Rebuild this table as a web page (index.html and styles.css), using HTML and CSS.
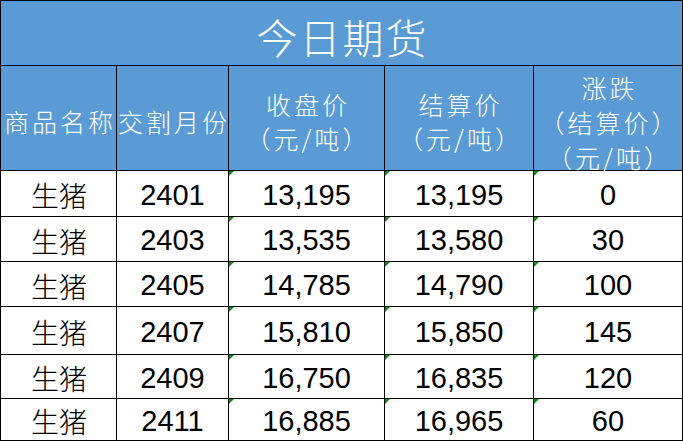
FILE: index.html
```html
<!DOCTYPE html>
<html lang="zh">
<head>
<meta charset="utf-8">
<title>今日期货</title>
<link rel="stylesheet" href="styles.css">
</head>
<body>
<div class="sheet">
  <div class="cell title"><span class="tt">今日期货</span></div>

  <div class="cell head"><span class="ln">商品名称</span></div>
  <div class="cell head"><span class="ln">交割月份</span></div>
  <div class="cell head"><span class="ln">收盘价</span><span class="ln">（元/吨）</span></div>
  <div class="cell head"><span class="ln">结算价</span><span class="ln">（元/吨）</span></div>
  <div class="cell head three"><span class="ln">涨跌</span><span class="ln">（结算价）</span><span class="ln">（元/吨）</span></div>

  <div class="cell name">生猪</div><div class="cell num">2401</div><div class="cell num flag">13,195</div><div class="cell num flag">13,195</div><div class="cell num flag">0</div>
  <div class="cell name">生猪</div><div class="cell num">2403</div><div class="cell num flag">13,535</div><div class="cell num flag">13,580</div><div class="cell num flag">30</div>
  <div class="cell name">生猪</div><div class="cell num">2405</div><div class="cell num flag">14,785</div><div class="cell num flag">14,790</div><div class="cell num flag">100</div>
  <div class="cell name">生猪</div><div class="cell num">2407</div><div class="cell num flag">15,810</div><div class="cell num flag">15,850</div><div class="cell num flag">145</div>
  <div class="cell name">生猪</div><div class="cell num">2409</div><div class="cell num flag">16,750</div><div class="cell num flag">16,835</div><div class="cell num flag">120</div>
  <div class="cell name">生猪</div><div class="cell num">2411</div><div class="cell num flag">16,885</div><div class="cell num flag">16,965</div><div class="cell num flag">60</div>
</div>
</body>
</html>
```

FILE: styles.css
```css
* { box-sizing: border-box; }
html, body { margin: 0; padding: 0; background: #ffffff; }

.sheet {
  width: 683px;
  height: 441px;
  display: grid;
  grid-template-columns: 115px 111px 155px 148px 148px;
  grid-template-rows: 64px 104px 45px 44px 44px 47px 43px 41px;
  gap: 1px;
  padding: 1px;
  background: #000000;
  overflow: hidden;
}

.cell {
  display: flex;
  align-items: center;
  justify-content: center;
  background: #ffffff;
  position: relative;
  white-space: nowrap;
}

.title {
  grid-column: 1 / 6;
  background: #5b9bd5;
  color: #ffffff;
  font-family: "Noto Sans CJK SC", sans-serif;
  font-size: 41px;
  font-weight: 300;
  letter-spacing: 2px;
  padding-top: 6px;
}
.tt { margin-right: -2px; }

.head {
  background: #5b9bd5;
  color: #ffffff;
  flex-direction: column;
  font-family: "Noto Sans CJK SC", sans-serif;
  font-size: 25px;
  font-weight: 300;
  letter-spacing: 3px;
  line-height: 34px;
  padding-top: 6px;
}
.head.three { padding-top: 8px; line-height: 35px; }
.ln { display: block; margin-right: -3px; }

.name {
  font-family: "Noto Sans CJK SC", sans-serif;
  font-size: 28px;
  font-weight: 300;
  color: #000000;
  padding: 3px 0 0 1px;
}

.num {
  font-family: "Liberation Sans", Arial, sans-serif;
  font-size: 29px;
  color: #000000;
  padding-top: 3px;
}

.flag::before {
  content: "";
  position: absolute;
  left: 0;
  top: 0;
  width: 0;
  height: 0;
  border-top: 5px solid #138a13;
  border-right: 5px solid transparent;
}
```
